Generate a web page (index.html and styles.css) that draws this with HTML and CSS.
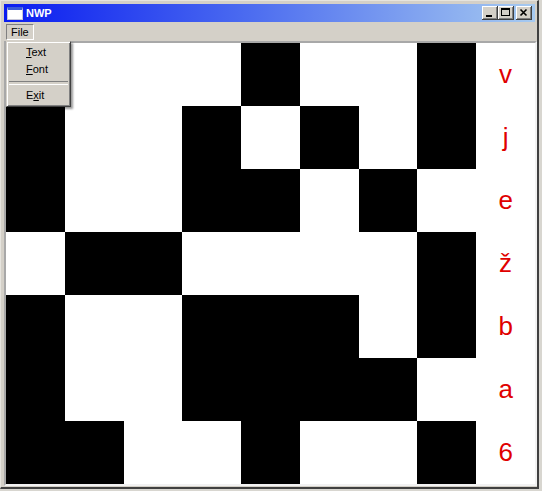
FILE: index.html
```html
<!DOCTYPE html>
<html>
<head>
<meta charset="utf-8">
<title>NWP</title>
<link rel="stylesheet" href="styles.css">
</head>
<body>
<div class="window">
  <div class="titlebar">
    <span class="appicon"></span>
    <span class="title">NWP</span>
    <div class="controls">
      <div class="cbtn"><svg width="16" height="14" viewBox="0 0 16 14"><rect x="4" y="9" width="6" height="2" fill="#000"/></svg></div>
      <div class="cbtn"><svg width="16" height="14" viewBox="0 0 16 14"><rect x="3.5" y="2.5" width="8" height="7" fill="none" stroke="#000"/><rect x="3" y="2" width="9" height="2" fill="#000"/></svg></div>
      <div class="cbtn close"><svg width="16" height="14" viewBox="0 0 16 14"><path d="M4.5 3.5 L10.5 9.5 M10.5 3.5 L4.5 9.5" stroke="#000" stroke-width="1.6" fill="none"/></svg></div>
    </div>
  </div>
  <div class="menubar">
    <span class="menu-file">File</span>
  </div>
  <div class="client">
    <div class="grid">
      <div class="c"></div><div class="c"></div><div class="c"></div><div class="c"></div><div class="c b"></div><div class="c"></div><div class="c"></div><div class="c b"></div><div class="c l">v</div>
      <div class="c b"></div><div class="c"></div><div class="c"></div><div class="c b"></div><div class="c"></div><div class="c b"></div><div class="c"></div><div class="c b"></div><div class="c l">j</div>
      <div class="c b"></div><div class="c"></div><div class="c"></div><div class="c b"></div><div class="c b"></div><div class="c"></div><div class="c b"></div><div class="c"></div><div class="c l">e</div>
      <div class="c"></div><div class="c b"></div><div class="c b"></div><div class="c"></div><div class="c"></div><div class="c"></div><div class="c"></div><div class="c b"></div><div class="c l">ž</div>
      <div class="c b"></div><div class="c"></div><div class="c"></div><div class="c b"></div><div class="c b"></div><div class="c b"></div><div class="c"></div><div class="c b"></div><div class="c l">b</div>
      <div class="c b"></div><div class="c"></div><div class="c"></div><div class="c b"></div><div class="c b"></div><div class="c b"></div><div class="c b"></div><div class="c"></div><div class="c l">a</div>
      <div class="c b"></div><div class="c b"></div><div class="c"></div><div class="c"></div><div class="c b"></div><div class="c"></div><div class="c"></div><div class="c b"></div><div class="c l">6</div>
    </div>
  </div>
  <div class="dropdown">
    <div class="mi"><u>T</u>ext</div>
    <div class="mi"><u>F</u>ont</div>
    <div class="sep"></div>
    <div class="mi">E<u>x</u>it</div>
  </div>
</div>
</body>
</html>
```
FILE: styles.css
```css
* { box-sizing: border-box; }
html, body { margin: 0; padding: 0; }
body {
  width: 542px;
  height: 491px;
  overflow: hidden;
  background: #d8d6d0;
  font-family: "Liberation Sans", Arial, sans-serif;
}
.window {
  position: relative;
  width: 539px;
  height: 489px;
  background: #d4d0c8;
  border-style: solid;
  border-width: 1px 2px 2px 1px;
  border-color: #e6e4de #404040 #404040 #e6e4de;
  padding: 3px 0 1px 3px;
  display: flex;
  flex-direction: column;
}
.titlebar {
  height: 18px;
  flex: none;
  margin-right: 2px;
  background: linear-gradient(to right, #0a1cf0 0%, #4a6af0 45%, #a6caf0 100%);
  display: flex;
  align-items: center;
  padding: 0 3px;
}
.appicon {
  width: 16px;
  height: 13px;
  background: #fff;
  border: 1px solid #c8c8d8;
  border-top: 3px solid #3a5ad8;
  flex: none;
}
.title {
  margin-left: 3px;
  color: #fff;
  font-weight: bold;
  font-size: 11px;
  line-height: 18px;
}
.controls {
  margin-left: auto;
  display: flex;
}
.cbtn {
  width: 16px;
  height: 14px;
  background: #d4d0c8;
  box-shadow: inset -1px -1px #404040, inset 1px 1px #ffffff, inset -2px -2px #808080, inset 2px 2px #d4d0c8;
}
.cbtn svg { display: block; }
.cbtn.close { margin-left: 2px; }
.menubar {
  height: 19px;
  flex: none;
  display: flex;
  align-items: center;
  padding-left: 2px;
}
.menu-file {
  height: 16px;
  padding: 0 4px;
  line-height: 14px;
  font-size: 11px;
  color: #000;
  border: 1px solid;
  border-color: #808080 #ffffff #ffffff #808080;
}
.client {
  height: 445px;
  flex: none;
  background: #fff;
  border: 2px solid;
  border-color: #a8a8a8 #f2f2f2 #f2f2f2 #a8a8a8;
}
.grid {
  display: grid;
  grid-template-columns: repeat(9, 1fr);
  grid-template-rows: repeat(7, 1fr);
  height: 100%;
}
.c { background: #fff; }
.c.b { background: #000; }
.c.l {
  display: flex;
  align-items: center;
  justify-content: center;
  color: #e00000;
  font-size: 26px;
}
.dropdown {
  position: absolute;
  left: 5px;
  top: 40px;
  width: 65px;
  height: 66px;
  background: #d4d0c8;
  border: 1px solid;
  border-color: #d4d0c8 #404040 #404040 #d4d0c8;
  box-shadow: inset 1px 1px #ffffff, inset -1px -1px #808080, 2px 2px 2px rgba(0,0,0,0.4);
  padding: 2px;
  font-size: 11px;
}
.mi {
  height: 17px;
  line-height: 17px;
  padding-left: 17px;
  color: #000;
}
.mi u { text-underline-offset: 1px; }
.sep {
  height: 9px;
  margin: 0 0;
  display: flex;
  flex-direction: column;
  justify-content: center;
}
.sep::before {
  content: "";
  display: block;
  height: 2px;
  border-top: 1px solid #808080;
  border-bottom: 1px solid #ffffff;
}
```
